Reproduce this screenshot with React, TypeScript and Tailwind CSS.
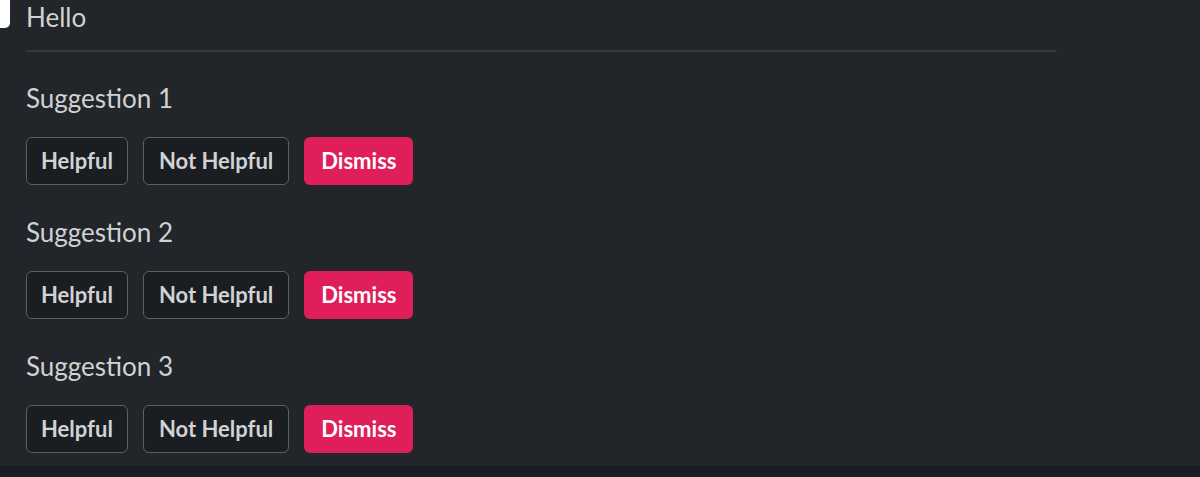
import React from "react";

const suggestions = ["Suggestion 1", "Suggestion 2", "Suggestion 3"];

function ActionButton({ label, danger, pad }: { label: string; danger?: boolean; pad: string }) {
  return (
    <button
      className={
        (danger
          ? "h-[48px] rounded-[6px] bg-[#e01e5a] text-white text-[22px] font-bold leading-none "
          : "h-[48px] rounded-[6px] border border-[#5c5f63] bg-[#1a1d21] text-[#d1d2d3] text-[22px] font-bold leading-none ") + pad
      }
    >
      {label}
    </button>
  );
}

export default function App() {
  return (
    <div className="w-[1200px] h-[477px] bg-[#222529] flex flex-col overflow-hidden" style={{ fontFamily: "Lato, 'Noto Sans', sans-serif" }}>
      <div className="flex-1 flex flex-col">
        {/* Header */}
        <div className="flex items-start">
          <div className="w-[10px] h-[28px] bg-white rounded-br-[5px]" />
          <div className="ml-[16px] pt-[2px] text-[26px] leading-[31px] text-[#d1d2d3]">Hello</div>
        </div>
        <div className="ml-[25px] mt-[17px] w-[1032px] h-[2px] rounded-full bg-[#35383c]" />

        {/* Suggestions */}
        <div className="pl-[26px] pt-[31px] flex flex-col gap-[32px]">
          {suggestions.map((s) => (
            <div key={s} className="flex flex-col gap-[23px]">
              <div className="text-[26px] leading-[31px] text-[#d1d2d3]">{s}</div>
              <div className="flex gap-[15px]">
                <ActionButton label="Helpful" pad="px-[14px]" />
                <ActionButton label="Not Helpful" pad="px-[15px]" />
                <ActionButton label="Dismiss" danger pad="px-[17px]" />
              </div>
            </div>
          ))}
        </div>
      </div>
      <div className="h-[11px] bg-[#1a1d21]" />
    </div>
  );
}
